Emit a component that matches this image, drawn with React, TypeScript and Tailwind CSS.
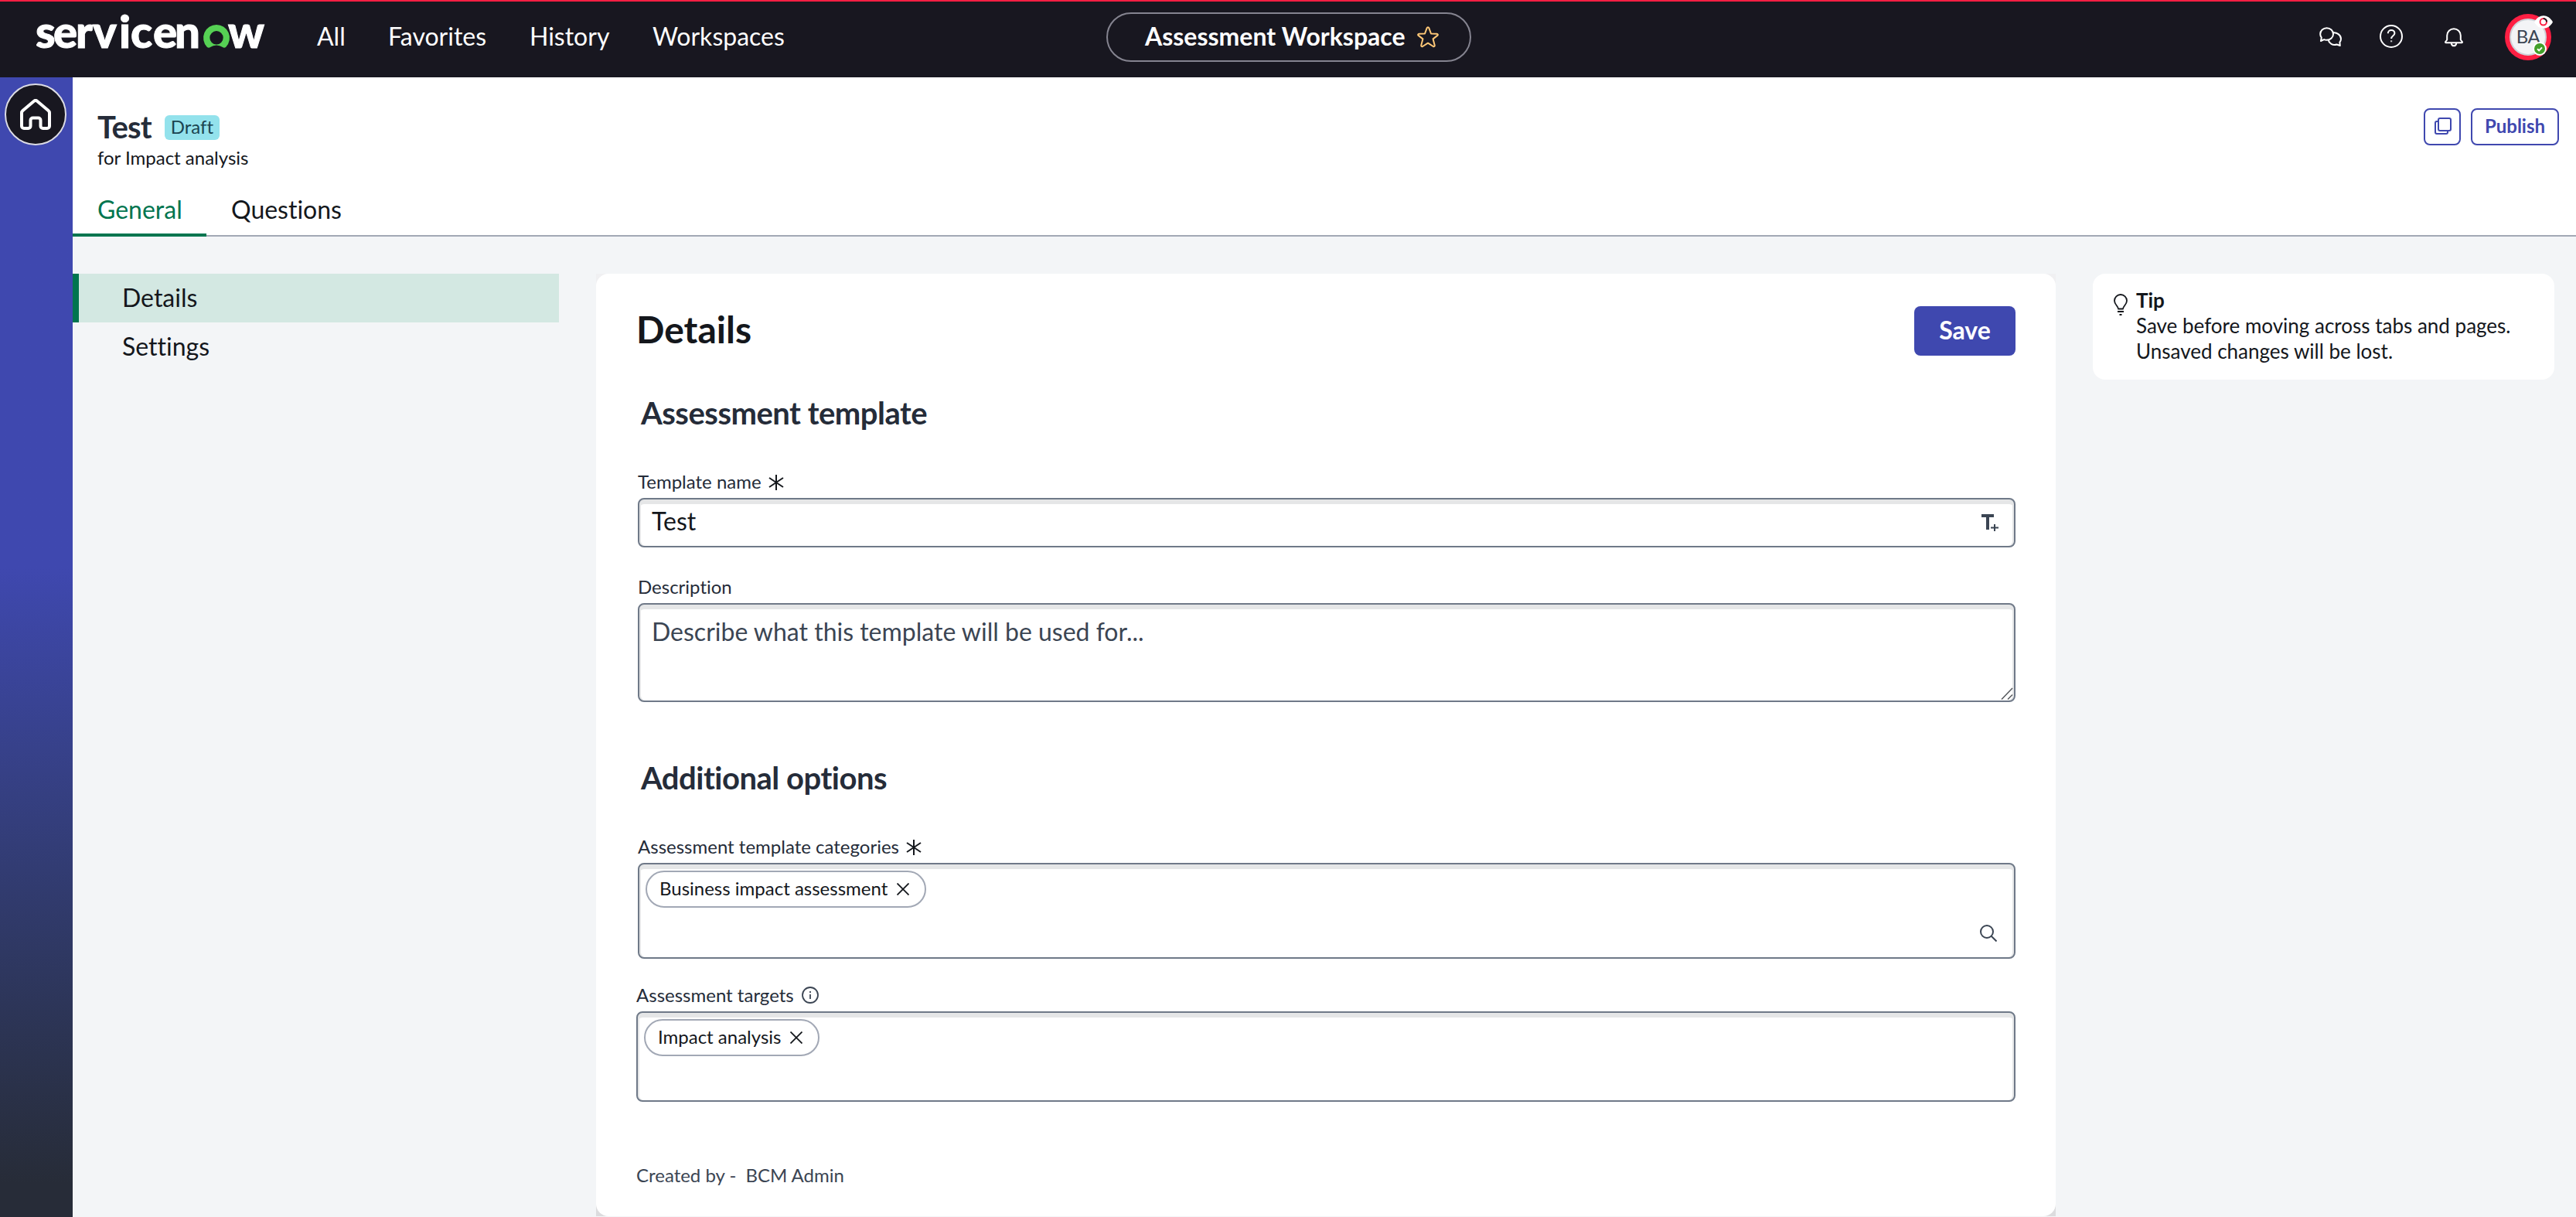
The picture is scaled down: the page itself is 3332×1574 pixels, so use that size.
import React from 'react';

interface ChipProps {
  label: string;
}

interface FieldLabelProps {
  children: React.ReactNode;
  className?: string;
}

const navLinks = [
  { label: 'All', width: 'w-[92px]' },
  { label: 'Favorites', width: 'w-[183px]' },
  { label: 'History', width: 'w-[159px]' },
  { label: 'Workspaces', width: 'w-[172px]' },
];

function Logo() {
  return (
    <svg width="300" height="80" viewBox="0 0 300 80" className="shrink-0" fontFamily="Lato, sans-serif" fontWeight="900" fontSize="58" fill="#fff" stroke="#fff" strokeWidth="1">
      <text x="-1 22 51 73 107 122 151 179" y="60">
        servicen
      </text>
      <path
        d="M233 30a17 17 0 0 0-12.300 28.700c1.200 1.200 3 1.300 4.300.400a13.500 13.500 0 0 1 16 0c1.300.9 3.100.8 4.300-.4A17 17 0 0 0 233 30zm0 25.500a8.700 8.700 0 1 1 0-17.400 8.700 8.700 0 0 1 0 17.400z"
        fill="#56d154"
        stroke="none"
        fillRule="evenodd"
      />
      <text x="248" y="60" textLength="47" lengthAdjust="spacingAndGlyphs">
        w
      </text>
    </svg>
  );
}

function StarIcon() {
  return (
    <svg width="28" height="28" viewBox="0 0 28 28" fill="none" stroke="#ffc877" strokeWidth="2" strokeLinejoin="round">
      <path d="M12.700 2.200a1.400 1.400 0 0 1 2.600 0l2.700 7.300 7.500.300c1.400.1 1.700 1.300.8 2.100l-5.700 4.500 2.100 8.200c.3 1.300-.8 2-1.900 1.400L14 21.700 7.200 26c-1.100.6-2.200-.1-1.900-1.400l2.100-8.200-5.700-4.500c-.9-.8-.6-2 .8-2.100l7.500-.3z" />
    </svg>
  );
}

function ChatIcon() {
  return (
    <svg width="30" height="26" viewBox="0 0 30 26" fill="none" stroke="#fff" strokeWidth="2" strokeLinejoin="round">
      <path d="M2 18l.8-4.300A7.500 7.500 0 0 1 1.200 9c0-4.400 3.700-7.800 8.400-7.800S18 4.600 18 9s-3.700 7.800-8.400 7.800c-1.300 0-2.500-.2-3.500-.7z" />
      <path d="M17.500 7.500c5-.8 10.500 2.400 10.500 7.800 0 1.700-.6 3.200-1.600 4.400L26.800 24l-4.200-1.500c-5.300 1.700-10-1.200-10.900-5.700" />
    </svg>
  );
}

function HelpIcon() {
  return (
    <svg width="30" height="30" viewBox="0 0 30 30" fill="none" stroke="#fff" strokeWidth="2">
      <circle cx="15" cy="15" r="14" />
      <path d="M10.800 11.300c0-2.600 1.900-4.300 4.300-4.300s4.300 1.600 4.300 4c0 3.400-4.300 3.200-4.300 7" />
      <path d="M15.100 20.300v2" strokeWidth="2.200" stroke="#c4c4c8" />
    </svg>
  );
}

function BellIcon() {
  return (
    <svg width="24" height="25" viewBox="0 0 24 25" fill="none" stroke="#fff" strokeWidth="2" strokeLinejoin="round">
      <path d="M3.200 15.500V10a8.800 8.800 0 0 1 17.600 0v5.500l2 2.500c.4.600.1 1.200-.6 1.200H1.800c-.7 0-1-.6-.6-1.200z" />
      <path d="M8.700 20c.3 2 1.600 3.300 3.300 3.300s3-1.300 3.300-3.300" />
    </svg>
  );
}

function Avatar() {
  return (
    <div className="relative flex size-[60px] items-center justify-center rounded-full bg-[#ff1f43]">
      <div className="flex size-12 items-center justify-center rounded-full border-2 border-[#cfd2d8] bg-[#f3f4f6] pb-[2px] text-2xl tracking-[-0.5px] text-[#3b4553]">
        BA
      </div>
      <svg className="absolute top-[2px] left-[38px]" width="24" height="17" viewBox="0 0 24 17">
        <path d="M0 8.500C3 3 7.500.2 12 .2s9 2.800 12 8.300c-3 5.500-7.500 8.200-12 8.200S3 14 0 8.500z" fill="#fff" />
        <circle cx="11.800" cy="8.300" r="4.200" fill="#fff" stroke="#ff1f43" strokeWidth="2" />
        <path d="M11.800 4.100a4.200 4.200 0 0 1 4.200 4.200" fill="none" stroke="#181720" strokeWidth="2" />
      </svg>
      <svg className="absolute top-[36px] left-[36px]" width="18" height="18" viewBox="0 0 18 18">
        <circle cx="9" cy="9" r="9" fill="#fff" />
        <circle cx="9" cy="9" r="7" fill="#43a02a" />
        <path d="M6 9.200l2.200 2.200L12 7.400" fill="none" stroke="#fff" strokeWidth="2" />
      </svg>
    </div>
  );
}

function HomeIcon() {
  return (
    <svg width="40" height="40" viewBox="0 0 40 40" fill="none" stroke="#fff" strokeWidth="4" strokeLinejoin="round">
      <path d="M18 2.800a3 3 0 0 1 4 0L36.500 15c.9.800 1.500 1.800 1.500 3v17a3 3 0 0 1-3 3h-5.500a3 3 0 0 1-3-3v-7.500a3 3 0 0 0-3-3h-7a3 3 0 0 0-3 3V35a3 3 0 0 1-3 3H5a3 3 0 0 1-3-3V18c0-1.200.6-2.200 1.500-3z" />
    </svg>
  );
}

function Asterisk() {
  return (
    <svg className="-ml-px mt-[2px]" width="20" height="20" viewBox="0 0 20 20" stroke="#14171c" strokeWidth="2">
      <path d="M10 0v20M1 4l18 12M19 4L1 16" />
    </svg>
  );
}

function Chip({ label }: ChipProps) {
  return (
    <div className="flex h-12 items-center gap-3 rounded-full border-2 border-[#a2a8b5] bg-white pr-5 pl-4">
      <span className="pb-[2px] text-2xl leading-8 text-[#14171c]">{label}</span>
      <svg width="16" height="16" viewBox="0 0 16 16" stroke="#14171c" strokeWidth="1.800">
        <path d="M.5.5l15 15M15.500.5l-15 15" />
      </svg>
    </div>
  );
}

function FieldLabel({ children, className = '' }: FieldLabelProps) {
  return <div className={`flex h-8 items-center gap-[10px] pb-[2px] text-2xl text-[#252c39] ${className}`}>{children}</div>;
}

const fieldBox = 'rounded-lg border-2 border-[#6f7988] bg-white shadow-[inset_0_6px_0_#e5e6e7,inset_2px_0_0_#e5e6e7,inset_-2px_0_0_#e5e6e7]';
const sectionTitle = 'pl-1 text-[40px] leading-[49px] font-bold tracking-[-0.5px] text-[#252c39]';

export default function App() {
  return (
    <div className="flex h-[1574px] w-[3332px] flex-col overflow-hidden bg-[#f3f5f7] font-['Lato',sans-serif] text-[#14171c] [font-variant-ligatures:none]">
      {/* Top bar */}
      <header className="flex h-[100px] shrink-0 items-start border-t-2 border-[#ff1f43] bg-[#181720] text-[32px] leading-10 text-white">
        <div className="flex w-[1431px] pl-[47px]">
          <Logo />
          <nav className="flex pt-[25px] pl-[63px]">
            {navLinks.map((link) => (
              <a key={link.label} className={`${link.width} whitespace-nowrap`}>
                {link.label}
              </a>
            ))}
          </nav>
        </div>
        <div className="mt-[14px] flex h-16 w-[472px] items-center rounded-full border-2 border-[#858490] pl-12">
          <span className="w-[352px] pb-[2px] font-bold whitespace-nowrap">Assessment Workspace</span>
          <StarIcon />
        </div>
        <div className="flex flex-1 items-center justify-end pt-4 pr-8">
          <div className="mr-[48px]"><ChatIcon /></div>
          <div className="mr-[54px] pb-[2px]"><HelpIcon /></div>
          <div className="mr-[54px]"><BellIcon /></div>
          <Avatar />
        </div>
      </header>

      <div className="flex flex-1">
        {/* Rail */}
        <aside className="flex w-[94px] shrink-0 justify-center bg-linear-to-b from-[#3f48af] from-43% to-[#272c38] to-97% pt-2 pr-[2px]">
          <div className="flex size-20 items-center justify-center rounded-full border-2 border-[#dcdce4] bg-[#181720]">
            <HomeIcon />
          </div>
        </aside>

        <div className="flex flex-1 flex-col">
          {/* Record header */}
          <div className="flex h-[206px] shrink-0 flex-col bg-white">
            <div className="flex h-[135px] justify-between pt-10 pr-[22px] pl-8">
              <div>
                <div className="flex h-12 items-start gap-[17px]">
                  <h1 className="text-[40px] leading-[48px] font-bold tracking-[-0.8px] text-[#252c39]">Test</h1>
                  <span className="mt-[9px] flex h-8 items-center rounded-md bg-[#93e2ec] px-2 pb-[2px] text-2xl text-[#1b4450]">Draft</span>
                </div>
                <p className="text-2xl leading-8">for Impact analysis</p>
              </div>
              <div className="flex gap-[13px]">
                <button className="flex size-12 items-center justify-center rounded-lg border-2 border-[#3f48af] pb-[2px] pl-[2px]">
                  <svg width="22" height="22" viewBox="0 0 22 22" fill="none" stroke="#3f48af" strokeWidth="2">
                    <rect x="5" y="1" width="16" height="16" rx="2" />
                    <path d="M4.500 5H3a2 2 0 0 0-2 2v12a2 2 0 0 0 2 2h12a2 2 0 0 0 2-2v-1.500" />
                  </svg>
                </button>
                <button className="h-12 w-[114px] rounded-lg border-2 border-[#3f48af] pb-[2px] text-2xl font-bold text-[#3f48af]">
                  Publish
                </button>
              </div>
            </div>
            <div className="flex h-[71px] border-b-2 border-[#a2a8b5] text-[32px] leading-10">
              <div className="h-[71px] w-[173px] border-b-4 border-[#00754f] pt-4 pl-8 text-[#00754f]">General</div>
              <div className="pt-4 pl-8">Questions</div>
            </div>
          </div>

          <div className="flex items-start pt-12">
            {/* Section nav */}
            <div className="flex w-[677px] flex-col text-[32px] leading-10">
              <div className="flex h-[63px] w-[629px] items-center border-l-8 border-[#00754f] bg-[#d3e8e2] pb-[2px] pl-14">Details</div>
              <div className="flex h-[63px] items-center pb-[2px] pl-16">Settings</div>
            </div>

            {/* Form card */}
            <div className="bg-linear-to-b from-[#f0f0f2] to-[#dcdcde]">
              <main className="h-[1219px] w-[1888px] rounded-2xl bg-white pr-[52px] pl-[54px]">
                <div className="flex h-[106px] items-end justify-between">
                  <h2 className="-ml-[2px] pb-[4px] text-[48px] leading-[60px] font-bold">Details</h2>
                  <button className="h-16 w-[131px] rounded-lg bg-[#3f48af] pb-[2px] text-[32px] font-bold text-white">Save</button>
                </div>

                <h3 className={`mt-[50px] ${sectionTitle}`}>Assessment template</h3>
                <FieldLabel className="mt-[49px]">
                  Template name <Asterisk />
                </FieldLabel>
                <div className={`mt-1 flex h-16 items-center justify-between pr-5 pl-4 ${fieldBox}`}>
                  <span className="pb-[4px] text-[32px] leading-10">Test</span>
                  <svg width="22" height="22" viewBox="0 0 22 22" fill="none" stroke="#3b4553">
                    <path d="M0 2h16M8 2v18" strokeWidth="4" />
                    <path d="M17 13v9M12 17.500h10" strokeWidth="2" />
                  </svg>
                </div>
                <FieldLabel className="mt-9">Description</FieldLabel>
                <div className={`mt-1 flex h-32 justify-between pl-4 ${fieldBox}`}>
                  <span className="pt-[15px] text-[32px] leading-10 text-[#3b4553]">Describe what this template will be used for...</span>
                  <svg className="self-end" width="18" height="18" viewBox="0 0 18 18" stroke="#55585c" strokeWidth="1.500">
                    <path d="M2 16.500L16 2M10 16.500l6-6" />
                  </svg>
                </div>

                <h3 className={`mt-[74px] ${sectionTitle}`}>Additional options</h3>
                <FieldLabel className="mt-[49px]">
                  Assessment template categories <Asterisk />
                </FieldLabel>
                <div className={`mt-1 flex h-[124px] items-start justify-between pt-2 pr-[22px] pl-2 ${fieldBox}`}>
                  <Chip label="Business impact assessment" />
                  <svg className="mt-[70px]" width="22" height="22" viewBox="0 0 22 22" fill="none" stroke="#3b4553" strokeWidth="2">
                    <circle cx="9" cy="9" r="8" />
                    <path d="M14.500 14.500l7 7" />
                  </svg>
                </div>
                <div className="-ml-[2px]">
                  <FieldLabel className="mt-8">
                    Assessment targets
                    <svg width="22" height="22" viewBox="0 0 22 22" fill="none" stroke="#3b4553" strokeWidth="1.800">
                      <circle cx="11" cy="11" r="10" />
                      <path d="M11 10v6M11 6v2" />
                    </svg>
                  </FieldLabel>
                  <div className={`mt-1 flex h-[117px] items-start pt-2 pl-2 ${fieldBox}`}>
                    <Chip label="Impact analysis" />
                  </div>
                  <div className="mt-[79px] flex gap-[12px] text-2xl leading-8 text-[#3b4553]">
                    <span>Created by -</span>
                    <span>BCM Admin</span>
                  </div>
                </div>
              </main>
            </div>

            {/* Tip */}
            <div className="ml-12 flex h-[137px] w-[597px] gap-[11px] rounded-2xl bg-white pt-[18px] pl-[27px]">
              <svg className="mt-2" width="18" height="28" viewBox="0 0 18 28" fill="none" stroke="#14171c" strokeWidth="1.800">
                <path d="M6 19.500c0-3.500-5-5.500-5-10.500a8 8 0 0 1 16 0c0 5-5 7-5 10.500z" strokeLinejoin="round" />
                <path d="M5 23h8M7.500 27h3" />
              </svg>
              <div className="text-[26px] leading-[33px]">
                <div className="font-bold">Tip</div>
                <p>
                  Save before moving across tabs and pages.
                  <br />
                  Unsaved changes will be lost.
                </p>
              </div>
            </div>
          </div>
        </div>
      </div>
    </div>
  );
}
